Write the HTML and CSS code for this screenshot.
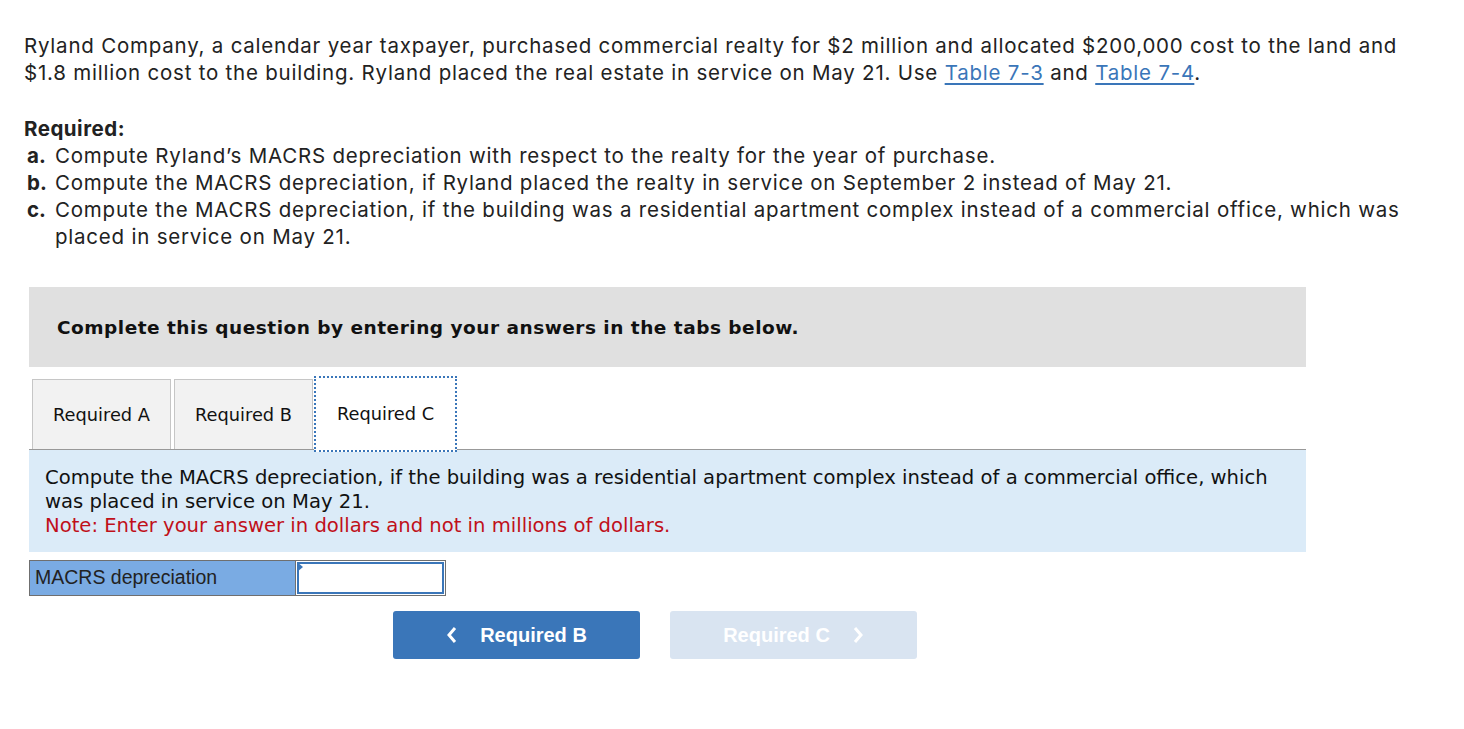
FILE: index.html
```html
<!DOCTYPE html>
<html>
<head>
<meta charset="utf-8">
<link rel="stylesheet" href="styles.css">
</head>
<body>
<div class="page">
  <p class="intro">Ryland Company, a calendar year taxpayer, purchased commercial realty for $2 million and allocated $200,000 cost to the land and $1.8 million cost to the building. Ryland placed the real estate in service on May 21. Use <a href="#">Table 7-3</a> and <a href="#">Table 7-4</a>.</p>
  <div class="required">
    <div class="req-title">Required:</div>
    <ol class="req-list">
      <li><span class="lbl">a.</span><span class="txt">Compute Ryland’s MACRS depreciation with respect to the realty for the year of purchase.</span></li>
      <li><span class="lbl">b.</span><span class="txt">Compute the MACRS depreciation, if Ryland placed the realty in service on September 2 instead of May 21.</span></li>
      <li><span class="lbl">c.</span><span class="txt">Compute the MACRS depreciation, if the building was a residential apartment complex instead of a commercial office, which was placed in service on May 21.</span></li>
    </ol>
  </div>
  <div class="panel">
    <div class="banner">Complete this question by entering your answers in the tabs below.</div>
    <div class="tabs">
      <div class="tab">Required A</div>
      <div class="tab">Required B</div>
      <div class="tab active">Required C</div>
    </div>
    <div class="instr">
      Compute the MACRS depreciation, if the building was a residential apartment complex instead of a commercial office, which was placed in service on May 21.
      <div class="note">Note: Enter your answer in dollars and not in millions of dollars.</div>
    </div>
    <div class="answer">
      <div class="ans-label">MACRS depreciation</div>
      <div class="ans-input"><span class="flag"></span></div>
    </div>
    <div class="nav">
      <button class="btn prev"><svg class="chev" width="12" height="18" viewBox="0 0 12 18"><path d="M9 2 L3 9 L9 16" fill="none" stroke="#fff" stroke-width="3"/></svg>Required B</button>
      <button class="btn next">Required C<svg class="chev" width="12" height="18" viewBox="0 0 12 18"><path d="M3 2 L9 9 L3 16" fill="none" stroke="#fff" stroke-width="3"/></svg></button>
    </div>
  </div>
</div>
</body>
</html>
```
FILE: styles.css
```css
* { box-sizing: border-box; }
html, body { margin: 0; padding: 0; background: #fff; }
.page {
  padding: 32px 0 0 24px;
  width: 1440px;
  font-family: "Inter", "Open Sans", sans-serif;
  color: #222;
}
.intro {
  margin: 0;
  width: 1400px;
  font-size: 20.5px;
  letter-spacing: 0.78px;
  line-height: 27px;
}
.intro a { color: #3a76b9; text-decoration: underline; text-underline-offset: 3px; }
.required { margin-top: 29px; font-size: 20.5px; letter-spacing: 0.78px; line-height: 27px; }
.req-title { font-weight: 700; letter-spacing: 0.5px; }
.req-list { list-style: none; margin: 0; padding: 0; }
.req-list li { display: flex; }
.req-list .lbl { font-weight: 700; width: 31px; padding-left: 3px; flex: none; letter-spacing: 0; }
.req-list .txt { width: 1370px; }
.panel {
  margin-top: 37px;
  margin-left: 5px;
  width: 1277px;
  font-family: "DejaVu Sans", Verdana, sans-serif;
}
.banner {
  background: #e0e0e0;
  height: 80px;
  display: flex;
  align-items: center;
  padding-left: 28px;
  font-weight: 700;
  font-size: 18.5px;
  letter-spacing: 0.5px;
  color: #111;
}
.tabs {
  display: flex;
  gap: 3px;
  margin-top: 12px;
  padding-left: 3px;
  border-bottom: 1px solid #999;
  height: 71px;
  align-items: flex-end;
}
.tab {
  height: 70px;
  width: 139px;
  border: 1px solid #c6c6c6;
  border-bottom: none;
  background: #f2f2f2;
  display: flex;
  align-items: center;
  justify-content: center;
  font-size: 17.8px;
  color: #111;
}
.tab.active {
  width: 143px;
  height: 76px;
  margin-bottom: -3px;
  background: #fff;
  border: 2px dotted #3a76b9;
  margin-left: -2px;
  padding-bottom: 2px;
}
.instr {
  background: #dbebf8;
  padding: 16px 16px 14px;
  font-size: 19.6px;
  line-height: 24px;
  color: #111;
}
.note { color: #c0101a; }
.answer {
  margin-top: 8px;
  display: flex;
  width: 417px;
  height: 36px;
  border: 1px solid #6f6f6f;
}
.ans-label {
  width: 266px;
  background: #7aabe3;
  font-family: "Liberation Sans", Arial, sans-serif;
  font-size: 19.5px;
  color: #222;
  padding-left: 5px;
  line-height: 33px;
  border-right: 1px solid #6f6f6f;
}
.ans-input {
  flex: 1;
  position: relative;
  background: #fff;
  border: 1px solid #3a76b9;
  margin: 1px;
  box-shadow: inset 0 0 0 1px #3a76b9;
}
.flag {
  position: absolute;
  left: -1px;
  top: -1px;
  width: 0;
  height: 0;
  border-top: 5px solid transparent;
  border-bottom: 5px solid transparent;
  border-left: 6px solid #3a76b9;
}
.nav {
  display: flex;
  gap: 30px;
  margin-top: 15px;
  padding-left: 364px;
}
.btn {
  width: 247px;
  height: 48px;
  border: none;
  border-radius: 3px;
  font-family: "Liberation Sans", Arial, sans-serif;
  font-weight: 700;
  font-size: 20px;
  color: #fff;
  display: flex;
  align-items: center;
  justify-content: center;
}
.btn .chev { display: block; }
.prev { background: #3a76b9; }
.prev .chev { margin-right: 22px; }
.next { background: #d9e4f1; }
.next .chev { margin-left: 22px; }
```
